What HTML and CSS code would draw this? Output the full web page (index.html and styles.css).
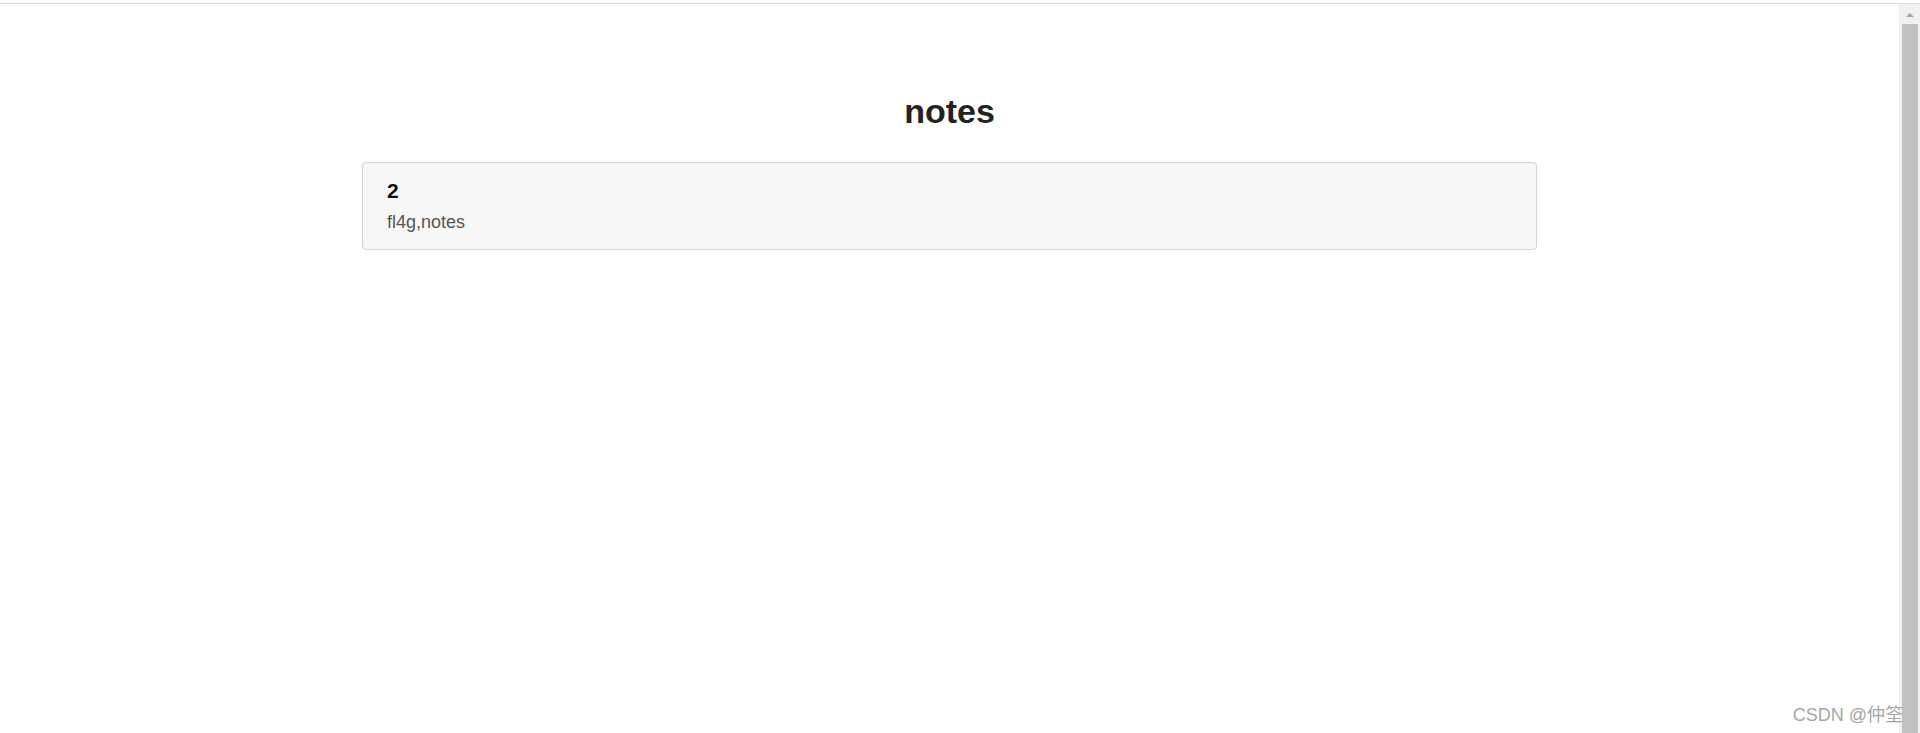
FILE: index.html
```html
<!DOCTYPE html>
<html lang="en">
<head>
<meta charset="utf-8">
<title>notes</title>
<link rel="stylesheet" href="styles.css">
</head>
<body>
<div class="frame">
  <main class="page">
    <h1 class="title">notes</h1>
    <div class="list">
      <div class="item">
        <h4 class="item-heading">2</h4>
        <p class="item-text">fl4g,notes</p>
      </div>
    </div>
  </main>
  <div class="scrollbar">
    <div class="arrow"></div>
    <div class="thumb"></div>
  </div>
  <div class="watermark">CSDN @仲筌</div>
</div>
</body>
</html>
```

FILE: styles.css
```css
html, body {
  margin: 0;
  padding: 0;
  background: #ffffff;
}
body {
  padding-top: 3px;
  font-family: "Liberation Sans", Arial, "Noto Sans CJK SC", sans-serif;
  overflow: hidden;
}
.frame {
  position: relative;
  display: flex;
  border-top: 1px solid #dadada;
  height: 729px;
}
.page {
  flex: 1;
  display: flex;
  flex-direction: column;
  align-items: center;
}
.title {
  margin: 87px 0 0 0;
  font-size: 34px;
  line-height: 40px;
  font-weight: bold;
  color: #222222;
}
.list {
  margin-top: 31px;
  width: 1175px;
}
.item {
  box-sizing: border-box;
  background: #f7f7f7;
  border: 1px solid #d3d3d3;
  border-radius: 4px;
  padding: 16px 25px 14px 24px;
}
.item-heading {
  margin: 0 0 7px 0;
  font-size: 21px;
  line-height: 23px;
  font-weight: bold;
  color: #111111;
}
.item-text {
  margin: 0;
  font-size: 18px;
  line-height: 26px;
  color: #555555;
}
.scrollbar {
  width: 21px;
  background: #f1f1f1;
  display: flex;
  flex-direction: column;
  align-items: center;
}
.arrow {
  margin-top: 9px;
  width: 0;
  height: 0;
  border-left: 4px solid transparent;
  border-right: 4px solid transparent;
  border-bottom: 4px solid #a3a3a3;
}
.thumb {
  margin-top: 7px;
  width: 16px;
  flex: 1;
  background: #c1c1c1;
}
.watermark {
  position: absolute;
  right: 17px;
  bottom: 8px;
  font-size: 18px;
  line-height: 20px;
  color: rgba(140, 140, 140, 0.8);
  font-family: "Liberation Sans", Arial, "Noto Sans CJK SC", sans-serif;
}
```
